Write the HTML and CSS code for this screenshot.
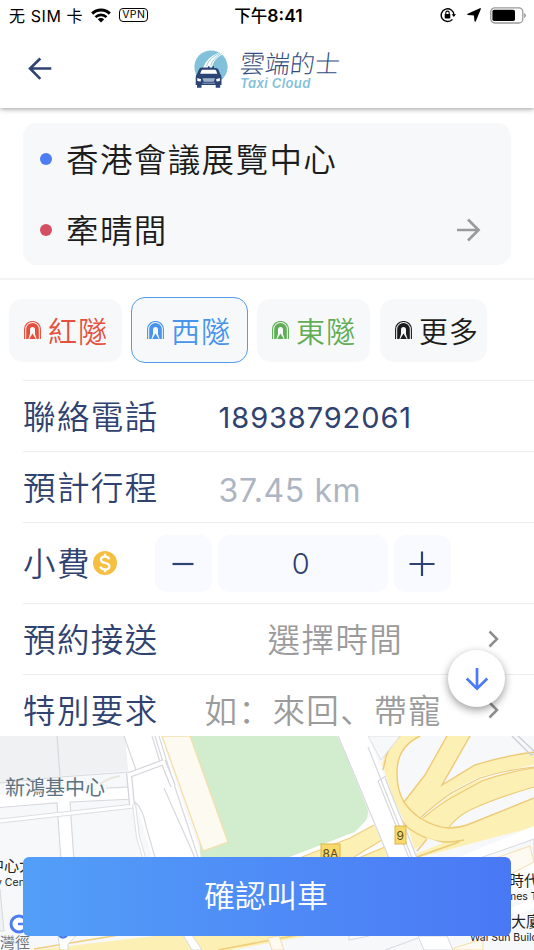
FILE: index.html
```html
<!doctype html>
<html lang="zh-Hant">

<head>
  <meta charset="utf-8">
  <title>雲端的士</title>
  <link rel="stylesheet" href="styles.css">
</head>

<body>
  <svg width="0" height="0" class="defs">
    <symbol id="tunnel" viewBox="0 0 17 18">
      <path d="M.6 18V8.200a7.900 7.700 0 0 1 15.800 0V18" fill="none" stroke="currentColor" stroke-width="1.100" />
      <path d="M2.200 18V8.300a6.300 6.300 0 0 1 12.600 0V18h-2.200L11 13V8.500a2.500 2.500 0 0 0-5 0V13l-1.600 5z" fill="currentColor" />
      <path d="M5.200 18l3.300-5.500 3.300 5.500z" fill="currentColor" />
    </symbol>
  </svg>

  <div class="status">
    <div class="status-left">
      <span>无 SIM 卡</span>
      <svg class="wifi" width="20" height="15" viewBox="0 0 20 15">
        <path d="M1.200 5.600a12.400 12.400 0 0 1 17.600 0" fill="none" stroke="#000" stroke-width="3" />
        <path d="M4.500 9.100a7.800 7.800 0 0 1 11 0" fill="none" stroke="#000" stroke-width="2.600" />
        <path d="M10 14.600l-3.200-3.300a4.600 4.600 0 0 1 6.400 0z" />
      </svg>
      <span class="vpn">VPN</span>
    </div>
    <div class="status-time">下午<b>8:41</b></div>
    <div class="status-right">
      <svg width="16" height="16" viewBox="0 0 16 16">
        <path d="M12.400 12.400A6.400 6.400 0 1 1 14 8" fill="none" stroke="#000" stroke-width="1.400" />
        <path d="M11.700 7.300h4.300l-2.200 2.800z" />
        <rect x="4.700" y="7" width="5.600" height="4.400" rx=".6" />
        <path d="M5.800 7.200V5.800a1.700 1.700 0 0 1 3.400 0v1.400" fill="none" stroke="#000" stroke-width="1.100" />
      </svg>
      <svg width="14" height="14" viewBox="0 0 14 14">
        <path d="M13.200.8L8.200 13 7.500 6.800 1 6.400z" stroke="#000" stroke-width="1.400" stroke-linejoin="round" />
      </svg>
      <svg width="36" height="17" viewBox="0 0 36 17">
        <rect x=".8" y=".8" width="32" height="15.200" rx="4" fill="none" stroke="#999" stroke-width="1.300" />
        <rect x="2.400" y="2.700" width="22.600" height="11.400" rx="1.800" />
        <path d="M34.200 5.800q1.700 1 1.700 2.700t-1.700 2.700z" fill="#999" />
      </svg>
    </div>
  </div>

  <div class="header">
    <svg class="back" width="24" height="24" viewBox="0 0 24 24">
      <path d="M23.300 11.500H2M12.300 1.500L2 11.500l10.300 10.300" fill="none" stroke="#2f4270" stroke-width="2.600" />
    </svg>
    <div class="logo">
      <svg width="35" height="39" viewBox="0 0 35 39">
        <circle cx="17" cy="17" r="16.600" fill="#82c1da" />
        <path d="M9 18Q12 8 25 2.500L29 4Q19 9 18 18z" fill="#fff" />
        <path d="M12.500 16Q15 8 26 3M16.700 16Q18 9 27.500 3.500" fill="none" stroke="#82c1da" stroke-width=".8" />
        <path d="M11 17.500h3v-1.200h1.500v1.200h3V16H20v2h2q1.700 0 2.500 1.800l1.600 4q1.400 1.200 1.400 3.500V35h-1.300v2.800h-4.500V35H7.500v2.800H3V35H1.700v-7.700q0-2.300 1.400-3.500l1.700-4Q5.500 17.500 8 17.500z" fill="#2c4577" />
        <path d="M8.700 19.700h12.100q1 0 1.400 1l1.100 3.100H6.200l1.100-3.100q.4-1 1.400-1z" fill="#fff" />
        <path d="M8.500 28.300h12.500l-1.300 3.400H9.800z" fill="#9fb2ca" />
        <path d="M8.500 33.200h12.500" stroke="#8ba2c1" />
        <path d="M3.300 28l3.800 1.300-.5 2.300-3.300-.6zM25.900 28l-3.800 1.300.5 2.300 3.300-.6z" fill="#fff" />
      </svg>
      <div class="logo-text">
        <div class="logo-zh">雲端的士</div>
        <div class="logo-en">Taxi Cloud</div>
      </div>
    </div>
  </div>

  <div class="trip">
    <div class="route">
      <div class="place"><i class="dot blue"></i><span>香港會議展覽中心</span></div>
      <div class="place">
        <i class="dot red"></i><span>牽晴間</span>
        <svg class="go" width="24" height="24" viewBox="0 0 24 24">
          <path d="M0 12h22M11 1.500L21.500 12 11 22.500" fill="none" stroke="#9b9b9b" stroke-width="2.700" />
        </svg>
      </div>
    </div>
  </div>

  <div class="tunnels">
    <div class="chip chip-red"><svg width="17" height="18"><use href="#tunnel" /></svg>紅隧</div>
    <div class="chip chip-blue active"><svg width="17" height="18"><use href="#tunnel" /></svg>西隧</div>
    <div class="chip chip-green"><svg width="17" height="18"><use href="#tunnel" /></svg>東隧</div>
    <div class="chip chip-more"><svg width="17" height="18"><use href="#tunnel" /></svg>更多</div>
  </div>

  <div class="form">
    <div class="row">
      <div class="label">聯絡電話</div>
      <div class="phone">18938792061</div>
    </div>
    <div class="row">
      <div class="label">預計行程</div>
      <div class="distance">37.45 km</div>
    </div>
    <div class="row tip">
      <div class="label">小費</div>
      <svg class="coin" width="24" height="24" viewBox="0 0 24 24">
        <circle cx="12" cy="12" r="12" fill="#f6bf42" />
        <path d="M16.300 8.200Q15.300 5.700 12 5.700 8 5.700 8 8.700 8 11 12 11.900q4.400 1 4.400 3.500 0 3-4.400 3-3.700 0-4.700-2.800M12 2.700v3M12 18v3.300" fill="none" stroke="#fff" stroke-width="2.300" />
      </svg>
      <div class="stepper">
        <div class="step"><svg width="26" height="26" viewBox="0 0 26 26"><path d="M2.500 14h21" /></svg></div>
        <div class="amount">0</div>
        <div class="step"><svg width="26" height="26" viewBox="0 0 26 26"><path d="M.5 14h25M13 1.500v25" /></svg></div>
      </div>
    </div>
    <div class="row">
      <div class="label">預約接送</div>
      <div class="hint time">選擇時間</div>
      <svg class="chevron" width="12" height="18" viewBox="0 0 12 18"><path d="M1.500 1.500L9 9l-7.500 7.500" /></svg>
    </div>
    <div class="row last">
      <div class="label">特別要求</div>
      <div class="hint note" lang="zh-Hans">如：來回、帶寵</div>
      <svg class="chevron" width="12" height="18" viewBox="0 0 12 18"><path d="M1.500 1.500L9 9l-7.500 7.500" /></svg>
    </div>
    <div class="fab">
      <svg width="24" height="24" viewBox="0 0 24 24">
        <path d="M12 1v20.500M1.700 11.500L12 21.700l10.300-10.200" fill="none" stroke="#4a7af5" stroke-width="2.700" />
      </svg>
    </div>
  </div>

  <div class="map">
    <svg width="534" height="214" viewBox="0 736 534 214">
      <rect y="736" width="534" height="214" fill="#f7f8fa" />
      <!-- city blocks -->
      <path d="M0 736h124l12 34-76 6-60 7z" fill="#f0f1f3" />
      <path d="M57 736l3 40M0 783l60-6 70-5" fill="none" stroke="#d7d9de" stroke-width="1.200" />
      <path d="M0 795l134-7v11l-63 3 3 60H61l-4-58-57 4z" fill="#fff" />
      <path d="M0 807.500l57-4.500 4 58M74 861l-4-59 64-3M106 788l22-1" fill="none" stroke="#d7d9de" stroke-width="1.200" />
      <path d="M100 784q8-6 20-8" fill="none" stroke="#e9e7df" stroke-width="2" />
      <!-- avenue -->
      <path d="M125 736h36l47 142h-50l-8-28-9-30-6-18-6-24z" fill="#fff" />
      <path d="M124 736l12 34M135 802q8 7 11 24l10 35M152 736l8 26M155 736l8 26M159 736l14 45 25 76M164 788l32 72" fill="none" stroke="#d7d9de" stroke-width="1.200" />
      <path d="M0 821l134-15" stroke="#dedfe3" stroke-width="5" />
      <path d="M0 821l134-15" stroke="#fff" stroke-width="3" />
      <path d="M134 804l4 33 7 24" fill="none" stroke="#dedfe3" stroke-width="4" />
      <path d="M134 804l4 33 7 24" fill="none" stroke="#fff" stroke-width="2" />
      <path d="M129 775l35-13M129 773l3 32M163 761l10 25" fill="none" stroke="#d3d5dc" stroke-width="6" />
      <path d="M129 775l35-13M129 773l3 32M163 761l10 25" fill="none" stroke="#fff" stroke-width="3.500" />
      <!-- park -->
      <path d="M190 736h147l10 21 21 51q2 13-13 24l-65 25-85 20-4-16z" fill="#d1edcd" />
      <path d="M162 736h28l38 106-25 9z" fill="#fdfaf2" stroke="#f5dfaa" stroke-width="1.300" />
      <!-- expressway west of the cross street -->
      <path d="M290 857l65-25 14-15 21-10v50z" fill="#fff" />
      <path d="M302 857l48-19 24-13 8 15-28 17z" fill="#fdf0b5" />
      <path d="M359 857l24-10h6v11z" fill="#fdf0b5" />
      <path d="M302 857l48-19 24-13M354 857l28-17M361 857l24-10" fill="none" stroke="#f0ce7e" stroke-width="1.300" />
      <!-- interchange -->
      <path d="M399 736h135v91l-117 31-8-27-15-31-12-36q3-15 17-28z" fill="#fdf0b5" />
      <path d="M417 739q-20 9-20 33 0 19 7 30l21-27 22-39h-26z" fill="#f7f8fa" />
      <path d="M470 736l-28 49 33-20q28-9 59-13v-16z" fill="#f7f8fa" />
      <path d="M534 787q-38 11-64 23-12 6-21 17 9 0 18-2 36-14 67-27z" fill="#f7f8fa" />
      <path d="M420 818l34-27 26-13 54-12" fill="none" stroke="#f7f8fa" stroke-width="2.500" />
      <path d="M420 736q-23 11-23 36 0 19 7 30 6 9 16 16 14 9 29 10 9 0 18-3l67-27" fill="none" stroke="#edca76" stroke-width="1.400" />
      <path d="M400 736q-14 13-15 26l-2 8M393 800q5 17 14 27 10 8 25 13 14 4 32 0" fill="none" stroke="#edca76" stroke-width="1.400" />
      <path d="M404 802l21-27 22-39M470 736l-28 49 33-20q28-9 59-13" fill="none" stroke="#edca76" stroke-width="1.400" />
      <path d="M420 818q19-17 33-26l27-14q25-8 54-11M423 818q19-16 37-25l22-12q25-9 52-13M449 827q9-11 21-17 26-12 64-23" fill="none" stroke="#edca76" stroke-width="1.100" />
      <path d="M412 851q9-5 15-13l16 5-30 12z" fill="#f7f8fa" />
      <path d="M417 857l42-15M417 851l10-12" fill="none" stroke="#edca76" stroke-width="1.400" />
      <path d="M459 857l75-31v68l-80 15z" fill="#fff" />
      <path d="M480 858l54-19v19l-22 16h-30z" fill="#f7f8fa" stroke="#d7d9de" />
      <path d="M496 858l34-12 4 16-27 14z" fill="#fdfaf2" stroke="#f5dfaa" />
      <!-- cross street -->
      <path d="M338 736h30l49 122h-28l-21-48z" fill="#fff" />
      <path d="M368 736h32l-19 24z" fill="#f7f8fa" stroke="#dfe0e4" />
      <path d="M338 736l9 21 22 53 20 48M368 747l14 35M378 781l31 77M381 780l31 78M385 778l32 80" fill="none" stroke="#d7d9de" stroke-width="1.200" />
      <path d="M378 781l8-5" stroke="#d7d9de" stroke-width="1.200" />
      <path d="M512 736l19 19 3-2M518 736l16 15" fill="none" stroke="#cfd1da" stroke-width="1.500" />
      <!-- lower strip -->
      <path d="M0 889l4 42H0" fill="#f0f1f3" stroke="#d7d9de" />
      <path d="M34 950l120-14h153l-76 14z" fill="#fdf0b5" />
      <path d="M34 949l85-14M218 950l85-16" fill="none" stroke="#f0ce7e" stroke-width="1.600" />
      <path d="M58 936h18l-8 8v6h-8zM183 935h9l10 15h-10z" fill="#fff" stroke="#d7d9de" />
      <path d="M268 938l11-2 5 14h-12z" fill="#fdfaf2" stroke="#f5dfaa" />
      <path d="M349 936v4l20-4M385 950l36-13" fill="none" stroke="#d7d9de" />
      <path d="M418 936h29l6 14h-29z" fill="#fff" stroke="#d7d9de" />
      <path d="M454 948l29-9v11h-29z" fill="#fdfaf2" stroke="#f5dfaa" />
      <path d="M511 897l23-11v64h-23z" fill="#f7f8fa" />
      <path d="M511 913l23-10" stroke="#fff" stroke-width="9" />
      <circle cx="19" cy="924" r="8" fill="#fff" stroke="#4c7df0" stroke-width="3" />
      <path d="M18 924h6" stroke="#4c7df0" stroke-width="2.500" />
      <circle cx="63" cy="933" r="4.500" fill="#fff" stroke="#4c7df0" stroke-width="2.500" />
      <!-- route shields -->
      <rect x="321" y="844" width="19" height="18" fill="#f7d96c" stroke="#dfb64b" />
      <rect x="395" y="826" width="11" height="18" fill="#f7d96c" stroke="#dfb64b" />
      <text x="322.500" y="857.500" class="shield">8A</text>
      <text x="396.500" y="840" class="shield">9</text>
      <text x="5" y="795" class="area">新鴻基中心</text>
      <text x="-11" y="871" class="poi">中心大</text>
      <text x="-4" y="886" class="poi-en">y Center</text>
      <text x="0" y="948" class="street">灣徑</text>
      <text x="509" y="886" class="poi">時代</text>
      <text x="507" y="900" class="poi-en">mes Tower</text>
      <text x="511" y="927" class="poi">大廈</text>
      <text x="470" y="941" class="poi-en">Wai Sun Building</text>
    </svg>
    <div class="confirm">確認叫車</div>
  </div>
</body>

</html>
```
FILE: styles.css
```css
* {
  box-sizing: border-box;
}
body {
  margin: 0;
  width: 534px;
  height: 950px;
  overflow: hidden;
  background: #fff;
  color: #1c1c1c;
  font-family: Inter, "Noto Sans CJK TC", sans-serif;
}
svg {
  display: block;
  flex: none;
}
.defs {
  position: absolute;
}

/* status bar */
.status {
  display: grid;
  grid-template-columns: 1fr auto 1fr;
  align-items: center;
  height: 30px;
  padding: 0 8px 0 9px;
  font-size: 16px;
  color: #000;
}
.status-left,
.status-right {
  display: flex;
  align-items: center;
}
.status-left {
  font-family: Inter, "Noto Sans CJK SC", sans-serif;
  letter-spacing: .6px;
}
.wifi {
  margin-left: 8px;
}
.vpn {
  margin-left: 8px;
  width: 29px;
  height: 14px;
  border: 1.5px solid #000;
  border-radius: 4px;
  font-size: 10.5px;
  line-height: 12px;
  letter-spacing: .4px;
  text-align: center;
}
.status-time {
  padding-left: 2px;
  font-weight: 500;
  font-size: 16.5px;
}
.status-time b {
  font-weight: 600;
  font-size: 17.5px;
}
.status-right {
  justify-content: flex-end;
  gap: 9px;
}
.status-right svg:first-child {
  margin-right: 2px;
}

/* header */
.header {
  position: relative;
  display: flex;
  height: 78px;
  background: #fff;
  box-shadow: 0 1px 5px rgba(0, 0, 0, .4);
  clip-path: inset(0 0 -12px 0);
}
.back {
  margin: 27px 0 0 28px;
}
.logo {
  display: flex;
  margin: 20px 0 0 142px;
}
.logo-text {
  margin-left: 11px;
}
.logo-zh {
  height: 26px;
  color: #354e7e;
  font-size: 25px;
  font-weight: 300;
  line-height: 28px;
  transform: skewX(-6deg);
}
.logo-en {
  color: #82c1da;
  font-size: 13px;
  font-weight: 600;
  font-style: italic;
  line-height: 14px;
  letter-spacing: .4px;
}

/* route */
.trip {
  height: 172px;
  padding: 15px 23px 0;
  border-bottom: 2px solid #f3f3f4;
}
.route {
  height: 142px;
  border-radius: 14px;
  background: #f7f8fa;
}
.place {
  display: flex;
  align-items: center;
  height: 71px;
  padding: 0 30px 0 17px;
  font-size: 32.5px;
  font-weight: 350;
  letter-spacing: 1.4px;
}
.place span {
  margin-top: -2px;
}
.dot {
  width: 12px;
  height: 12px;
  margin-right: 14px;
  border-radius: 50%;
}
.blue {
  background: #4c7df3;
}
.red {
  background: #d54f62;
}
.go {
  margin-left: auto;
}

/* tunnel chips */
.tunnels {
  display: flex;
  align-items: center;
  gap: 9px;
  height: 100px;
  padding: 0 9px;
}
.chip {
  display: flex;
  align-items: center;
  width: 113px;
  height: 63px;
  padding-left: 15px;
  border-radius: 14px;
  background: #f7f8fa;
  font-size: 29px;
  font-weight: 350;
  letter-spacing: 1px;
}
.chip svg {
  margin-right: 7px;
}
.active {
  width: 117px;
  height: 66px;
  border: 1.5px solid #539bec;
}
.chip-red {
  color: #e5503c;
}
.chip-blue {
  color: #4794ed;
}
.chip-green {
  color: #5fad55;
}
.chip-more {
  width: 107px;
  margin-left: 1px;
}

/* form */
.form {
  position: relative;
  height: 356px;
  padding-left: 23px;
}
.row {
  display: flex;
  align-items: center;
  height: 71px;
  border-top: 1.5px solid #ececee;
  color: #2f4270;
}
.label {
  margin-top: -4px;
  font-size: 32.5px;
  font-weight: 350;
  letter-spacing: 1.4px;
}
.phone,
.distance {
  margin: 2px 0 0 60px;
  font-size: 29px;
  font-weight: 400;
  letter-spacing: .9px;
}
.distance {
  margin-top: 6px;
  font-size: 32px;
  letter-spacing: .6px;
  color: #adb5c4;
}
.tip {
  height: 81px;
}
.coin {
  margin-left: 2px;
}
.stepper {
  display: flex;
  gap: 6px;
  margin-left: 38px;
}
.step,
.amount {
  display: flex;
  align-items: center;
  justify-content: center;
  width: 57px;
  height: 57px;
  border-radius: 12px;
  background: #f9faff;
}
.amount {
  width: 170px;
  padding-right: 4px;
  font-size: 29px;
  font-weight: 350;
}
.step path {
  fill: none;
  stroke: #2f4270;
  stroke-width: 2.2;
}
.hint {
  margin-top: -4px;
  color: #9b9b9b;
  font-size: 32.5px;
  font-weight: 350;
  letter-spacing: 1.4px;
  white-space: nowrap;
}
.time {
  margin-left: 109px;
}
.note {
  margin-left: 46px;
  font-family: "Noto Sans CJK SC", sans-serif;
}
.chevron {
  margin: 0 34px 0 auto;
}
.chevron path {
  fill: none;
  stroke: #8e8e8e;
  stroke-width: 2.5;
}
.fab {
  position: absolute;
  top: 270px;
  right: 29px;
  display: flex;
  align-items: center;
  justify-content: center;
  width: 57px;
  height: 57px;
  border-radius: 50%;
  background: #fff;
  box-shadow: 0 3px 9px rgba(0, 0, 0, .4);
}

/* map */
.map {
  position: relative;
  height: 214px;
}
.map text {
  fill: #222;
}
.map .area {
  fill: #5c737f;
  font-size: 20px;
}
.map .poi {
  font-size: 15px;
}
.map .poi-en {
  font-size: 10.5px;
}
.map .street {
  fill: #70757a;
  font-size: 15px;
}
.map .shield {
  fill: #5d4b1c;
  font-size: 12px;
}
.confirm {
  position: absolute;
  top: 121px;
  left: 23px;
  width: 488px;
  height: 79px;
  padding-right: 2px;
  border-radius: 6px;
  background: linear-gradient(90deg, #539ff8, #4a78f5);
  color: #fff;
  font-size: 31px;
  font-weight: 350;
  line-height: 78px;
  text-align: center;
}
```
